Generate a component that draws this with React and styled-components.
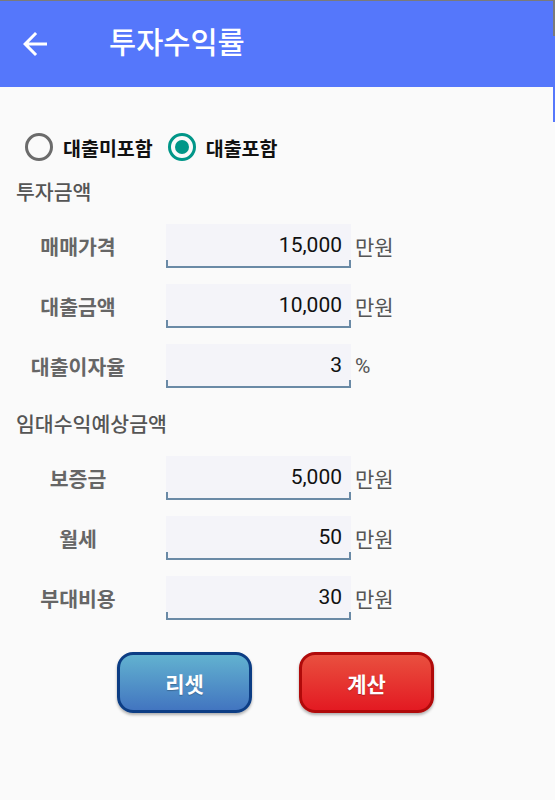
import React, { useState } from 'react'
import styled, { createGlobalStyle } from 'styled-components'

const GlobalStyle = createGlobalStyle`
  html, body {
    margin: 0;
    padding: 0;
    background: #fafafa;
    font-family: Roboto, "Noto Sans CJK KR", sans-serif;
  }
`

const Screen = styled.div`
  position: relative;
  width: 555px;
  min-height: 800px;
  background: #fafafa;
`

// 오른쪽 끝 스크롤 표시줄
const ScrollEdge = styled.div`
  position: absolute;
  top: 0;
  right: 0;
  width: 2px;
  height: 122px;
  background: linear-gradient(#7a7a7a 0 36px, #5577fb 36px 100%);
`

const Header = styled.header`
  height: 86px;
  border-top: 1px solid #7a7a7a;
  background: #5577fb;
  display: flex;
  align-items: center;
  padding-left: 17px;
`

const BackButton = styled.button`
  width: 36px;
  height: 36px;
  padding: 0;
  border: 0;
  background: none;
  display: flex;
  color: #fff;
`

const Title = styled.h1`
  margin: 0 0 0 56px;
  font-size: 29.5px;
  font-weight: 500;
  color: #fff;
  line-height: 1;
`

const Content = styled.main`
  padding-top: 40px;
`

const RadioGroup = styled.div`
  display: flex;
  align-items: center;
  height: 40px;
  padding-left: 25px;
  gap: 15px;
`

const RadioLabel = styled.label`
  display: flex;
  align-items: center;
  gap: 10px;
  font-size: 19.5px;
  font-weight: 700;
  color: #111;
  cursor: pointer;
`

const RadioCircle = styled.span`
  box-sizing: border-box;
  width: 28px;
  height: 28px;
  border-radius: 50%;
  border: 3px solid ${p => (p.$checked ? '#009688' : '#6b6b6b')};
  display: flex;
  align-items: center;
  justify-content: center;
  &::after {
    content: '';
    width: 14px;
    height: 14px;
    border-radius: 50%;
    background: #009688;
    display: ${p => (p.$checked ? 'block' : 'none')};
  }
`

const SectionTitle = styled.h2`
  margin: ${p => p.$top}px 0 9px 16px;
  font-size: 20.5px;
  line-height: 28px;
  font-weight: 500;
  color: #555;
`

const Row = styled.div`
  display: flex;
  align-items: center;
  height: 60px;
`

const FieldLabel = styled.span`
  width: 156px;
  text-align: center;
  font-size: 20.5px;
  font-weight: 700;
  color: #666;
  margin-right: 10px;
`

const InputBox = styled.div`
  position: relative;
  box-sizing: border-box;
  width: 185px;
  height: 44px;
  background: #f4f4f9;
  border-bottom: 2px solid #6a8aa6;
  display: flex;
  align-items: center;
  justify-content: flex-end;
  padding-right: 9px;
  font-size: 21px;
  color: #111;
  &::before,
  &::after {
    content: '';
    position: absolute;
    bottom: 0;
    width: 2px;
    height: 6px;
    background: #6a8aa6;
  }
  &::before { left: 0; }
  &::after { right: 0; }
`

const Unit = styled.span`
  margin-left: 4px;
  font-size: 21px;
  color: #555;
`

const ButtonBar = styled.div`
  display: flex;
  gap: 47px;
  padding: 24px 0 0 117px;
`

const ActionButton = styled.button`
  box-sizing: border-box;
  width: 135px;
  height: 61px;
  border-radius: 16px;
  border: 3px solid ${p => p.$border};
  background: linear-gradient(${p => p.$from}, ${p => p.$to});
  box-shadow: 0 2px 3px rgba(0, 0, 0, 0.3);
  color: #fff;
  font-family: Roboto, "Noto Sans CJK KR", sans-serif;
  font-size: 21px;
  font-weight: 700;
  text-shadow: 0 1px 1px rgba(0, 0, 0, 0.25);
`

const sections = [
  {
    title: '투자금액',
    top: 12,
    rows: [
      { label: '매매가격', value: '15,000', unit: '만원' },
      { label: '대출금액', value: '10,000', unit: '만원' },
      { label: '대출이자율', value: '3', unit: '%' },
    ],
  },
  {
    title: '임대수익예상금액',
    top: 15,
    rows: [
      { label: '보증금', value: '5,000', unit: '만원' },
      { label: '월세', value: '50', unit: '만원' },
      { label: '부대비용', value: '30', unit: '만원' },
    ],
  },
]

const App = () => {
  const [loan, setLoan] = useState(true)

  return (
    <>
      <GlobalStyle />
      <Screen>
        <Header>
          <BackButton aria-label='뒤로'>
            <svg width='36' height='36' viewBox='0 0 24 24' fill='currentColor'>
              <path d='M20 11H7.83l5.59-5.59L12 4l-8 8 8 8 1.41-1.41L7.83 13H20v-2z' />
            </svg>
          </BackButton>
          <Title>투자수익률</Title>
        </Header>
        <ScrollEdge />
        <Content>
          <RadioGroup>
            <RadioLabel onClick={() => setLoan(false)}>
              <RadioCircle $checked={!loan} />
              대출미포함
            </RadioLabel>
            <RadioLabel onClick={() => setLoan(true)}>
              <RadioCircle $checked={loan} />
              대출포함
            </RadioLabel>
          </RadioGroup>

          {sections.map(sec => (
            <section key={sec.title}>
              <SectionTitle $top={sec.top}>{sec.title}</SectionTitle>
              {sec.rows.map(r => (
                <Row key={r.label}>
                  <FieldLabel>{r.label}</FieldLabel>
                  <InputBox>{r.value}</InputBox>
                  <Unit>{r.unit}</Unit>
                </Row>
              ))}
            </section>
          ))}

          <ButtonBar>
            <ActionButton $from='#62b2d0' $to='#4275c0' $border='#0c3d84'>리셋</ActionButton>
            <ActionButton $from='#e9503f' $to='#e31a22' $border='#b00a0a'>계산</ActionButton>
          </ButtonBar>
        </Content>
      </Screen>
    </>
  )
}

export default App
